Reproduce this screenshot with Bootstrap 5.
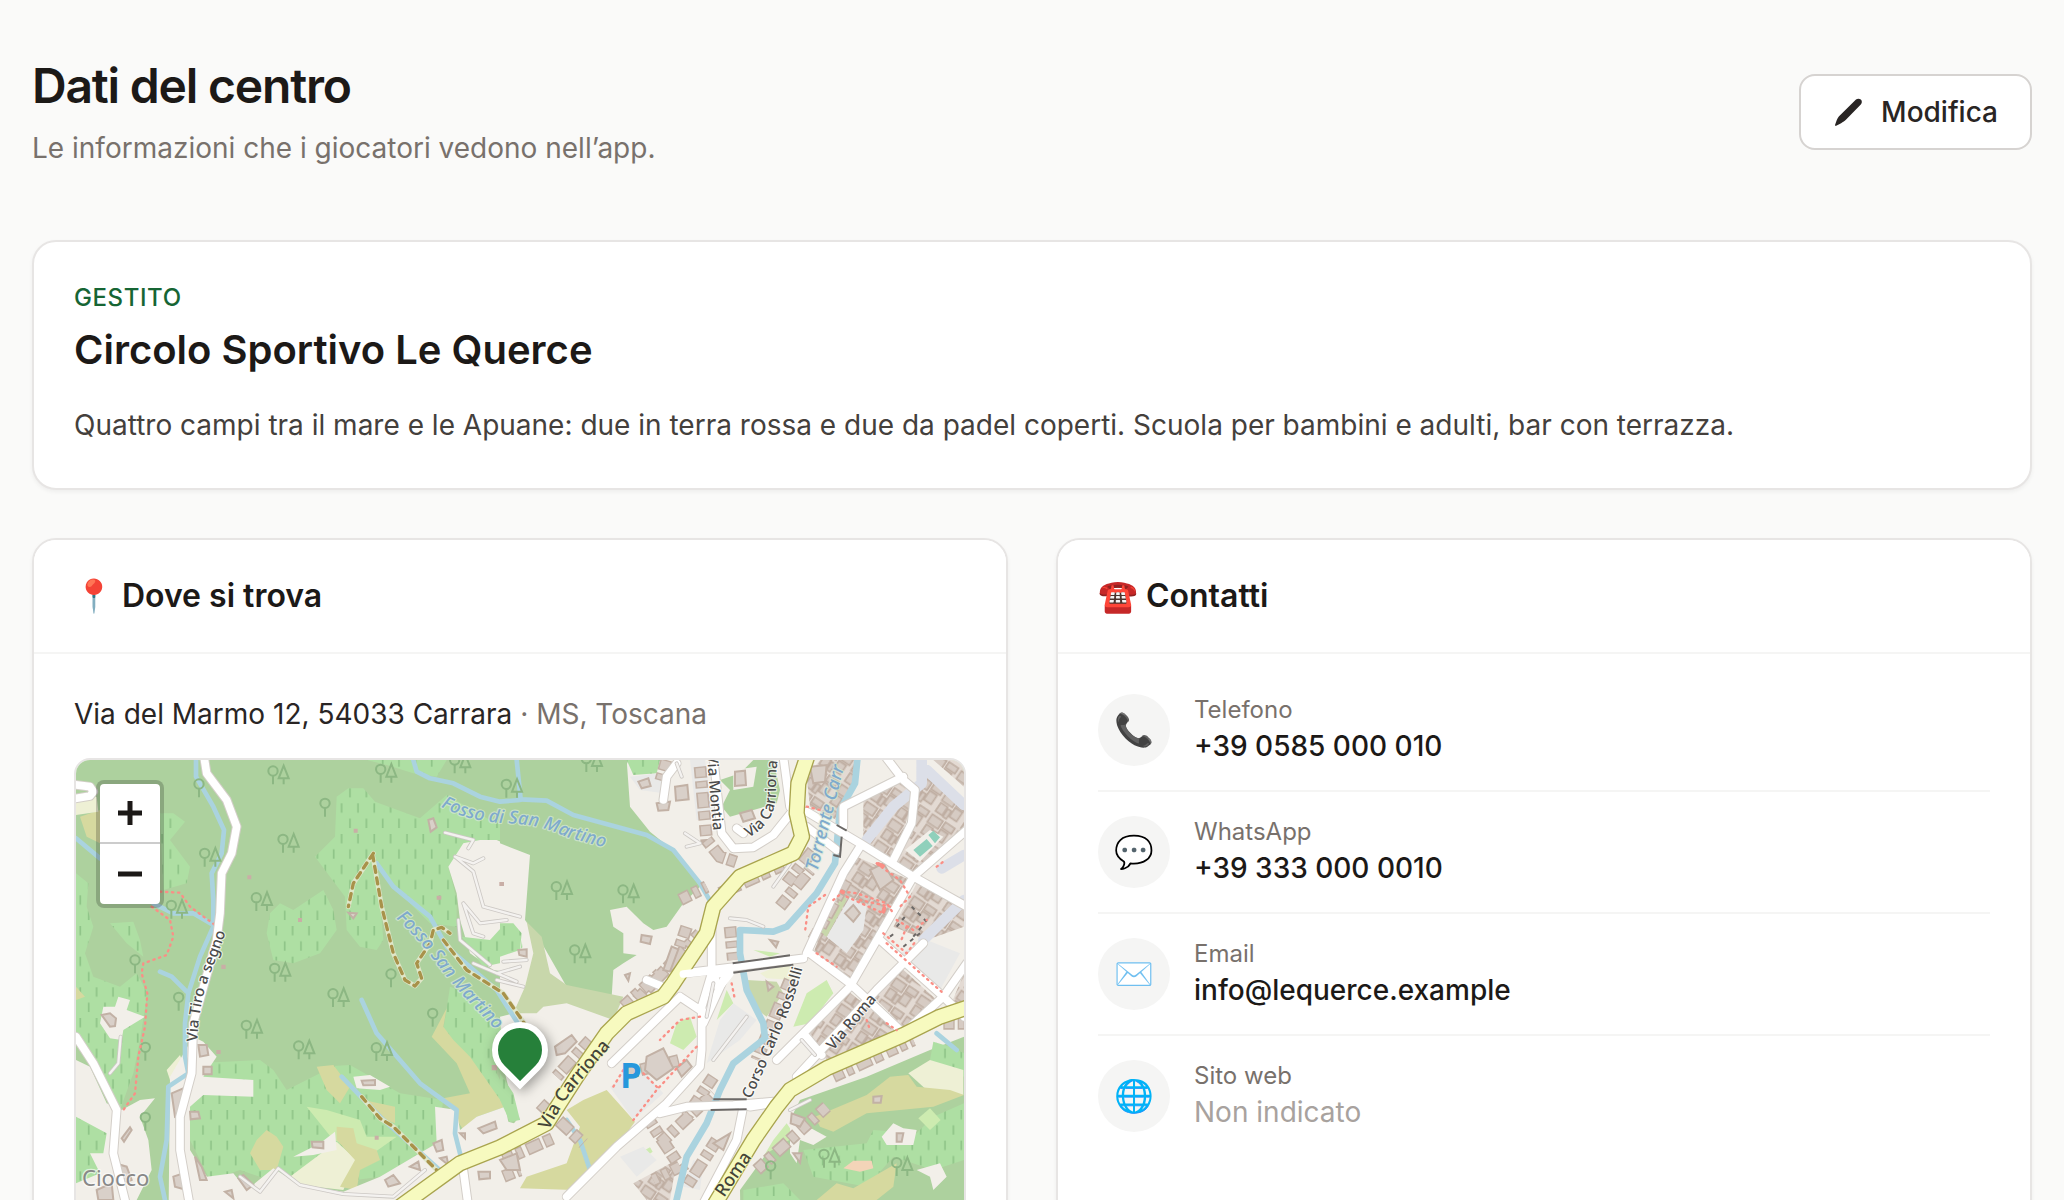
<!DOCTYPE html>
<html lang="it">
<head>
<meta charset="utf-8">
<meta name="viewport" content="width=device-width, initial-scale=1">
<title>Dati del centro</title>
<link href="https://cdn.jsdelivr.net/npm/bootstrap@5.3.0/dist/css/bootstrap.min.css" rel="stylesheet">
<style>
  body { font-family: Inter, "Noto Color Emoji", sans-serif; font-size: 28px; line-height: 40px; color: #1c1917; background: #fafaf9; }
  .page { height: 100vh; overflow: hidden; padding: 56px 32px 0; }
  .page-head { margin-bottom: 72px; }
  h1 { font-size: 48px; line-height: 60px; font-weight: 600; letter-spacing: -0.025em; margin-bottom: 12px; }
  .muted { color: #78716c; }
  .faint { color: #a8a29e; }
  .btn-edit { --bs-btn-bg: #fff; --bs-btn-border-color: #d6d3d1; --bs-btn-color: #292524; --bs-btn-hover-bg: #f5f5f4; --bs-btn-hover-border-color: #d6d3d1;
    --bs-btn-border-width: 2px; --bs-btn-border-radius: 16px; --bs-btn-padding-x: 32px; --bs-btn-padding-y: 16px;
    --bs-btn-font-size: 28px; --bs-btn-line-height: 40px; --bs-btn-font-weight: 500; gap: 16px; }
  .panel { --bs-card-border-width: 2px; --bs-card-border-color: #e7e5e4; --bs-card-border-radius: 24px; --bs-card-inner-border-radius: 22px;
    --bs-card-spacer-x: 40px; --bs-card-spacer-y: 40px; --bs-card-cap-padding-x: 40px; --bs-card-cap-padding-y: 32px; --bs-card-cap-bg: #fff;
    box-shadow: 0 2px 4px rgba(0,0,0,.05); color: inherit; }
  .panel > .card-header { border-bottom: 2px solid #f5f5f4; }
  .panel h2 { font-size: 32px; line-height: 48px; font-weight: 600; margin: 0; }
  .eyebrow { font-size: 24px; line-height: 32px; font-weight: 500; letter-spacing: 0.025em; color: #166534; margin-bottom: 8px; }
  .panel .club-name { font-size: 40px; line-height: 56px; margin-bottom: 24px; }
  .club-text { line-height: 46px; color: #44403c; }
  .grid-gap { --bs-gutter-x: 48px; --bs-gutter-y: 48px; }
  .address { color: #292524; margin-bottom: 24px; }
  .map-box { height: 640px; border: 2px solid #e7e5e4; border-radius: 16px; overflow: hidden; position: relative; }
  .map-box > svg { display: block; width: 100%; height: 100%; }
  .zoom-ctl { position: absolute; left: 20px; top: 20px; width: 68px; border: 4px solid rgba(0,0,0,.2); border-radius: 8px; background: #fff; background-clip: padding-box; }
  .zoom-ctl button { height: 60px; border: 0; background: none; padding: 0; display: flex; align-items: center; justify-content: center; }
  .zoom-ctl button:first-child { border-bottom: 2px solid #ccc; }
  .map-pin { position: absolute; left: 50%; top: 262px; width: 56px; height: 56px; margin-left: -28px; background: #26803a; border: 6px solid #fff; border-radius: 50% 50% 50% 0; transform: rotate(-45deg); box-shadow: 0 4px 12px rgba(0,0,0,.35); }
  .contact { gap: 24px; padding: 24px 0; border-bottom: 2px solid #f5f5f4; }
  .contact:first-child { padding-top: 0; }
  .contact:last-child { border-bottom: 0; }
  .contact-icon { width: 72px; height: 72px; border-radius: 50%; background: #f5f5f4; flex: none; font-size: 32px; }
  .contact-label { font-size: 24px; line-height: 32px; }
  .contact a { color: #1c1917; font-weight: 500; text-decoration: none; }
  /* map layers */
  .wood { fill: #add19e; } .scrub { fill: url(#scrubFill); } .heath { fill: #d6d99f; } .grass { fill: #cdebb0; }
  .farm { fill: #eef0d5; } .town { fill: #f2efe9; } .orchard { fill: #c8d7ab; } .paved { fill: #e9e9e8; } .pitch { fill: #8fd0bb; }
  .water { fill: none; stroke: #aad3df; stroke-width: 14; stroke-linejoin: round; stroke-linecap: round; }
  .water-wide { stroke-width: 20; }
  .road-case, .road, .main-case, .main-road, .lane-case, .lane, .footway, .track, .track-halo, .plaza { fill: none; stroke-linejoin: round; stroke-linecap: round; }
  .road-case { stroke: #d3cec8; stroke-width: 29; } .road { stroke: #fff; stroke-width: 23; }
  .main-case { stroke: #a9a44e; stroke-width: 49; } .main-road { stroke: #f7fabf; stroke-width: 41; }
  .lane-case { stroke: #ccc8c4; stroke-width: 12; } .lane { stroke: #f4f2f0; stroke-width: 7; }
  .plaza { stroke: #dcdfe8; stroke-width: 32; }
  .footway { stroke: #fa8f86; stroke-width: 7; stroke-dasharray: 4 14; }
  .track { stroke: #a8924a; stroke-width: 10; stroke-dasharray: 18 17; } .track-halo { stroke: #dfe6c8; stroke-width: 14; }
  .bld-edge { fill: none; stroke: #c2b1a5; stroke-width: 38; stroke-dasharray: 34 9 22 12 48 8 28 14; }
  .bld { fill: none; stroke: #d6cbc3; stroke-width: 28; stroke-dasharray: 26 17 14 20 40 16 20 22; stroke-dashoffset: -4; }
  .block { fill: #d9d0c9; stroke: #c2b1a5; stroke-width: 6; }
  .bridge { fill: none; stroke: #6b6866; stroke-width: 6; }
  .tree { fill: none; stroke: #8cb783; stroke-width: 6; }
  .street, .stream { font-family: "Noto Sans", sans-serif; font-size: 45px; font-weight: 500; fill: #4a4a4a; stroke: #fff; stroke-width: 7; stroke-opacity: .7; paint-order: stroke; stroke-linejoin: round; }
  .street.on-main { font-size: 54px; fill: #444438; stroke: #f7fabf; }
  .stream { font-size: 54px; font-style: italic; fill: #7eaacd; stroke: #d9ead6; }
  .hamlet { font-family: "Noto Sans", sans-serif; font-size: 66px; fill: #888; stroke: #fff; stroke-width: 8; stroke-opacity: .6; paint-order: stroke; }
  .parking { font-family: "DejaVu Sans", sans-serif; font-size: 96px; fill: #2698dc; stroke: #2698dc; stroke-width: 6; }
</style>
<script src="https://cdn.jsdelivr.net/npm/bootstrap@5.3.0/dist/js/bootstrap.bundle.min.js" defer></script>
</head>
<body>
<main class="page">
  <header class="page-head d-flex justify-content-between align-items-center">
    <div>
      <h1>Dati del centro</h1>
      <p class="muted mb-0">Le informazioni che i giocatori vedono nell’app.</p>
    </div>
    <button type="button" class="btn btn-edit d-flex align-items-center">
      <svg width="32" height="32" viewBox="0 0 32 32" aria-hidden="true"><path fill="currentColor" d="M23 3.600c1.300-1.200 3.400-1.300 4.800 0s1.400 3.500 0 4.900L13.400 23.300c-1.800 1.800-3.400 2.900-5.300 3.900l-4.900 2.600c-.7.400-1.400-.2-1.100-1l1.600-4.500c.7-2 1.700-3.400 3.100-4.800z"/></svg>
      Modifica
    </button>
  </header>

  <section class="card panel mb-5">
    <div class="card-body">
      <div class="eyebrow">GESTITO</div>
      <h2 class="club-name">Circolo Sportivo Le Querce</h2>
      <p class="club-text mb-0">Quattro campi tra il mare e le Apuane: due in terra rossa e due da padel coperti. Scuola per bambini e adulti, bar con terrazza.</p>
    </div>
  </section>

  <div class="row row-cols-2 grid-gap mt-0">
    <div class="col mt-0">
      <section class="card panel h-100">
        <div class="card-header"><h2>📍 Dove si trova</h2></div>
        <div class="card-body">
          <p class="address">Via del Marmo 12, 54033 Carrara <span class="muted">· MS, Toscana</span></p>
          <div class="map-box">
            <svg viewBox="48 60 2664 1908" preserveAspectRatio="xMidYMin slice" role="img" aria-label="Mappa di Carrara">
              <defs>
                <pattern id="scrubFill" width="49" height="92" patternUnits="userSpaceOnUse">
                  <rect width="49" height="92" fill="#aedfa3"/>
                  <path d="M12 6v28M37 52v28" stroke="#8fc488" stroke-width="5"/>
                </pattern>
                <pattern id="roofs" width="92" height="78" patternUnits="userSpaceOnUse" patternTransform="rotate(34)">
                  <rect width="92" height="78" fill="#e3dad3"/>
                  <path d="M4 5h38v28H4zM50 3h34v20H50zM50 29h26v32H50zM6 40h24v30H6zM34 44h12v28H34z" fill="#d6cbc3" stroke="#bfaea2" stroke-width="5"/>
                </pattern>
                <g id="treePair" class="tree"><circle cx="-16" cy="-12" r="14"/><path d="M-16 2v26M16-28L1 10h30zM16 10v18"/></g>
                <g id="treeOne" class="tree"><circle cx="0" cy="-10" r="14"/><path d="M0 4v26"/></g>
                <path id="pTiro" d="M412 905Q415 790 455 690T502 555"/>
                <path id="pMartino" d="M1008 535Q1070 590 1125 665T1260 820Q1320 880 1400 980"/>
                <path id="pMartino2" d="M-178 200Q-90 246 20 250T200 292Q280 312 400 348"/>
                <path id="pTorrente" d="M952 395Q985 270 1012 160T1060 -20"/>
                <path id="pMontia" d="M622 44Q628 160 646 330"/>
                <path id="pCarrTop" d="M745 293Q830 250 828 150T848 20"/>
                <path id="pCorso" d="M752 1078Q820 930 860 830T920 630"/>
                <path id="pRoma" d="M1000 932L1150 755"/>
                <path id="pCarriona" d="M146 1172Q190 1080 240 1025T372 868"/>
                <path id="pRoma2" d="M672 1374L785 1210"/>
              </defs>
              <rect class="wood" x="48" y="60" width="2664" height="1908"/>

              <!-- western slopes -->
              <path class="scrub" d="M830 170L865 145 910 145 945 185 1080 235 1160 165 1290 240 1400 250 1400 300 1260 300 1165 380 1190 480 1190 560 1110 550 1000 440 930 350 960 480 970 600 950 630 900 620 860 570 855 470 765 350 825 290z"/>
              <path class="scrub" d="M630 520L660 490 700 510 790 450 820 510 830 570 780 640 700 670 640 660 620 580zM920 60H1160L1130 110 1060 100 980 75zM48 400L85 430 80 500 100 560 75 640 100 710 180 740 230 700 262 760 240 900 220 1000 180 1110 48 880zM300 220L340 220 375 245 330 300 390 380 380 430 310 450zM150 550L220 545 240 600 250 650 200 610z"/>
              <path class="scrub" d="M400 970L600 960 640 990 680 1050 780 1000 780 980 870 975 1020 1060 1150 1080 1130 1210 960 1310 700 1345 540 1290 450 1320 390 1200 370 1100zM1170 740L1250 770 1330 860 1300 900 1310 1000 1380 1140 1350 1145 1290 1040 1200 930 1150 870z"/>
              <path class="heath" d="M1160 805L1150 860 1180 900 1230 950 1335 1100 1250 1130 1210 1170 1150 1075 1230 1060 1190 970 1115 890zM770 980L820 975 870 1040 840 1090 800 1050zM570 1240L590 1200 620 1170 650 1190 670 1220 650 1290 600 1290zM60 230L120 210 120 310 80 290zM910 1080L1005 1100 1005 1150 950 1130z"/>
              <path class="grass" d="M740 1100L800 1110 900 1140 920 1190 1010 1190 940 1240 820 1200z"/>
              <path class="farm" d="M690 1310L830 1205 890 1260 850 1350 720 1335zM320 990L360 945 380 1000 330 1020zM48 180L110 170 115 215 48 225z"/>
              <path class="heath" d="M830 1160L880 1165 890 1210 950 1230 960 1260 900 1290 890 1350 840 1340 885 1260 830 1200zM48 740L75 770 48 780z"/>
              <path class="town" d="M1165 380L1210 310 1260 300 1310 300 1410 345 1400 620 1380 1000 1370 700 1300 690 1230 640 1200 540 1190 460z"/>
              <path class="town" d="M120 850L130 800 165 800 175 770 210 780 200 810 255 830 190 870 185 900 150 895zM48 960L90 980 140 1090 185 1110 240 1080 285 1075 240 1130 265 1200 275 1290 230 1380V1968H48zM330 1010L400 890 430 905 470 950 430 1010 580 1020 580 1070 430 1065 390 1100 390 1230 460 1340 480 1968 320 1968z"/>
              <path class="town" d="M450 1380L440 1310 520 1300 560 1350 640 1285 720 1335 850 1355 960 1310 1130 1210 1125 1100 1190 1110 1200 1170 1250 1130 1335 1100 1345 1145 1400 1160V1968H450zM700 1250L780 1210 825 1175 830 1230 760 1245zM880 1010L930 1005 990 1040 960 1050 890 1045z"/>
              <path class="scrub" d="M1205 590L1290 600 1340 545 1390 548 1390 620 1340 665 1270 680z"/>
              <path class="scrub" d="M48 1130L140 1180 130 1240 90 1240 120 1300 48 1330z"/>

              <!-- town and eastern hills -->
              <g transform="translate(1320 0)">
                <path class="town" d="M385 60H1392V1968H0V1200L50 1140 10 980 0 830 40 820 75 700 60 550 40 340 300 300z"/>
                <path class="town" d="M0 310L90 345 75 540 60 640 80 720 45 820 0 760z"/>
                <path class="scrub" d="M0 550L40 550 65 580 60 630 0 650zM0 1000L40 1060 60 1140 30 1145 0 1080z"/>
                <path class="wood" d="M60 60H380L390 200 450 275 530 340 600 440 550 490 500 560 460 570 430 550 380 500 330 510 340 560 370 580 370 640 410 645 370 670 340 690 335 770 200 740 120 600 75 540 90 345 0 310V60z"/>
                <path class="scrub" d="M380 60H480L470 100 400 105z"/>
                <path class="orchard" d="M80 545L125 590 150 700 200 735 370 770 340 840 200 790 130 800 110 820 40 820 75 740 100 640z"/>
                <path class="heath" d="M80 1310L200 1270 240 1160 200 1110 250 1080 320 1050 405 1145 350 1220 220 1350 60 1345z"/>
                <path fill="url(#roofs)" d="M920 110L960 60 1080 60 1040 190 1010 240 930 200zM1090 170L1220 120 1240 180 1180 360 1090 300zM1250 160L1290 90 1392 180V280L1240 400 1190 370zM1300 60H1392V140zM1070 350L1230 420 1110 640 1040 730 940 640 1000 480zM1250 430L1392 500V560L1280 600 1180 560zM1110 760L1200 680 1310 780 1210 860zM930 880L1040 750 1190 870 980 960zM400 1330L530 1260 510 1380 440 1380zM1350 800L1392 700V800z"/>
                <path class="grass" d="M920 760L980 720 1000 760 930 850 880 860zM820 1200L860 1150 880 1180 850 1230 790 1250zM530 850L570 830 590 890 550 930 510 910zM760 630L840 640 810 650zM650 840L680 750 700 790zM425 1235L450 1222 458 1235 435 1252z"/>
                <path class="orchard" d="M740 720L830 725 850 760 800 830 760 800z"/>
                <path class="farm" d="M780 700L880 660 880 720 800 715z"/>
                <path class="paved" d="M570 60H615L640 240 590 240zM390 110L480 100 490 160 420 150zM980 590L1050 470 1100 500 1090 570 1040 640zM1200 640L1280 600 1380 640 1320 750 1240 700zM330 1040L420 980 490 1060 400 1140zM620 970L660 840 700 790 770 840 720 900zM360 1250L430 1220 470 1260 410 1310zM550 1340L580 1260 610 1270 600 1350z"/>
                <path class="orchard" d="M960 580L1030 465 1040 480 980 590z"/>
                <path class="wood" d="M660 120L720 100 760 60 820 60 840 150 830 190 690 230 665 200 690 150z"/>
                <path class="town" d="M700 90L770 80 760 140 700 150z"/>
                <path class="wood" d="M1392 890L1290 930 1100 1010 900 1080 870 1140 885 1190 800 1240 720 1350 730 1968H1392z"/>
                <path class="scrub" d="M1300 905L1350 920 1392 940V1010L1290 960zM910 1230L1100 1210 1120 1170 1250 1180 1300 1130 1392 1090V1260L1300 1290 1180 1250 1100 1340 940 1310zM730 1350L850 1330 900 1380H730z"/>
                <path class="farm" d="M1225 1000L1290 960 1390 990V1065L1280 1050z"/>
                <path class="heath" d="M945 1130L1100 1065 1170 1010 1225 1005 1250 1040 1350 1050 1392 1065 1300 1100 1100 1120 1000 1175 960 1160zM1060 1345L1190 1270 1180 1340 1130 1380H950L1010 1330z"/>
                <path class="grass" d="M1255 1135L1290 1105 1322 1140 1290 1170z"/>
                <path class="town" d="M1145 1190L1180 1150 1210 1165 1250 1170 1240 1215 1160 1215zM1250 1290L1320 1270 1340 1310 1300 1350 1290 1310zM870 1130L980 1190 940 1215 900 1200 890 1270 870 1240z"/>
                <path class="town" d="M1215 330L1290 270 1330 290 1260 365z"/>
                <path class="pitch" d="M1240 330L1280 297 1298 318 1260 350zM1285 285L1300 272 1320 292 1305 310z"/>
                <path class="plaza" d="M1265 60L1265 130 1180 200 1100 300M1280 90L1392 195M1325 385L1392 345M1270 600L1392 480"/>
              </g>

              <!-- streams -->
              <path class="water" d="M408 60V110L460 200 492 270 485 340 455 400 460 480 460 560 420 650 385 760 375 850 375 950 385 1000 325 1040 320 1200 300 1310 315 1380M300 695L335 710 380 755M48 295L120 355M280 490L340 520 400 520 460 555"/>
              <path class="water" d="M950 370L1000 440 1110 530 1160 620 1310 750 1380 860M905 780L950 880 1080 1030 1190 1110 1185 1180 1205 1260M845 1010L960 1130 1150 1300M1060 60L1070 95 1110 115 1180 130 1260 170 1320 185 1380 180"/>
              <g transform="translate(1320 0)">
                <path class="water" d="M50 60L62 178 140 182 220 225 440 285 520 330 600 430 640 500M200 1140L240 1200 270 1290M1310 880L1370 930"/>
              </g>

              <!-- buildings -->
              <g transform="translate(1320 0)">
                <path class="bld-edge" d="M600 80L620 300 660 350 720 370M410 780L600 580M370 800L480 700M690 560L700 660M270 900L170 1010M120 1090L250 1210M560 560L520 680M860 430L940 330M660 460L860 370M840 500L930 390M770 1290L980 1100M1000 1010L1240 900M440 1130L540 1280 460 1320M640 1010L560 1130M870 720L770 960M650 1200L560 1340M380 1000L540 960M480 1210L640 1060M10 1260L170 1190M1040 420L940 600M500 60L480 130M540 480L620 440M10 1310L60 1290M1330 850L1392 850"/>
                <path class="bld" d="M600 80L620 300 660 350 720 370M410 780L600 580M370 800L480 700M690 560L700 660M270 900L170 1010M120 1090L250 1210M560 560L520 680M860 430L940 330M660 460L860 370M840 500L930 390M770 1290L980 1100M1000 1010L1240 900M440 1130L540 1280 460 1320M640 1010L560 1130M870 720L770 960M650 1200L560 1340M380 1000L540 960M480 1210L640 1060M10 1260L170 1190M1040 420L940 600M500 60L480 130M540 480L620 440M10 1310L60 1290M1330 850L1392 850"/>
                <path class="block" d="M165 920L215 885 230 905 195 940 170 945zM425 585L455 590 450 612 422 605zM415 125L445 115 452 138 425 145zM525 140L562 135 566 178 528 182zM470 190L510 185 505 210 475 212zM705 95L735 92 738 135 705 138zM440 950L490 925 520 985 470 1020 435 990zM1120 1070L1145 1068 1142 1088 1120 1088zM1190 1180L1210 1180 1205 1205 1190 1205zM875 1120L915 1135 900 1160 872 1150zM880 1240L905 1240 900 1268zM810 600L835 605 828 622zM800 725L820 740 805 752zM640 1210L690 1180 670 1230zM375 705L390 700 385 722zM55 630L80 628 80 650 58 645zM720 220L755 210 765 235 730 245zM930 80L980 75 975 125 940 130zM490 690L515 620 535 628 510 695z"/>
                <path class="block" d="M1110 390L1150 370 1180 420 1140 450zM1035 520L1060 495 1080 520 1060 545zM530 985L560 960 575 980 545 1010z"/>
                <path fill="#f3d4b8" d="M1030 1285L1060 1262H1115L1120 1285 1080 1295z"/>
                <path class="water water-wide" d="M1072 60L1065 130 1020 210 1005 370 950 460 860 560 820 575 720 570 720 640 740 750 790 850 795 895 700 970 660 1050 620 1150 560 1250 525 1400"/>
              </g>
              <path class="block" d="M125 825L150 820 168 835 165 858 150 860zM415 915L440 915 445 945 420 950zM430 980L455 980 455 1003 430 1003zM335 1060L370 1045 365 1120 345 1130zM390 1115L415 1115 420 1135 392 1138zM185 1195L210 1162 215 1170 192 1205zM165 1270L200 1280 215 1320 190 1330zM110 1350L155 1330 160 1380 115 1380zM340 1310L370 1300 380 1350 345 1340zM405 1250L425 1280 440 1320 420 1320zM535 1315L550 1305 580 1335 560 1350zM755 1205L790 1205 790 1225 758 1222zM905 1022L945 1020 945 1035 910 1036zM1105 240L1120 235 1130 262 1112 275zM865 518L890 520 880 535zM1120 1210L1145 1200 1150 1230 1130 1235zM1140 1255L1160 1250 1165 1275zM1255 1165L1305 1145 1310 1165 1270 1180zM1255 1295L1290 1295 1290 1315 1258 1318zM1200 1180L1215 1180 1215 1195zM975 1320L1000 1305 1020 1330 985 1340zM1050 1280L1075 1265 1080 1290zM495 1355L515 1350 520 1375zM1320 1260L1370 1240 1380 1290 1340 1290z"/>
              <path fill="#c9aea6" d="M881 266h12v12h-12zM562 406h12v12h-12zM714 534h12v12h-12zM1130 467h14v12h-14zM484 674h13v13h-13zM469 930h13v12h-13zM1318 426h14v12h-14zM944 1187h12v12h-12zM1295 975h16v16h-16z"/>

              <!-- forest marks -->
              <use href="#treePair" x="655" y="105"/><use href="#treePair" x="978" y="100"/><use href="#treePair" x="1200" y="72"/><use href="#treeOne" x="795" y="200"/>
              <use href="#treePair" x="685" y="310"/><use href="#treePair" x="450" y="352"/><use href="#treePair" x="605" y="485"/><use href="#treePair" x="660" y="697"/>
              <use href="#treeOne" x="993" y="712"/><use href="#treePair" x="835" y="773"/><use href="#treePair" x="575" y="868"/><use href="#treePair" x="732" y="930"/>
              <use href="#treePair" x="965" y="935"/><use href="#treeOne" x="1118" y="830"/><use href="#treePair" x="350" y="508"/><use href="#treeOne" x="417" y="142"/>
              <use href="#treeOne" x="356" y="782"/><use href="#treeOne" x="256" y="932"/><use href="#treeOne" x="256" y="1142"/><use href="#treeOne" x="225" y="670"/>
              <use href="#treePair" x="1355" y="145"/><use href="#treePair" x="1595" y="68"/><use href="#treePair" x="1505" y="452"/><use href="#treePair" x="1705" y="462"/>
              <use href="#treePair" x="1560" y="642"/><use href="#treePair" x="2308" y="1255"/><use href="#treePair" x="2526" y="1280"/><use href="#treeOne" x="2132" y="1288"/>

              <!-- lanes and paths -->
              <path class="lane-case" d="M1155 278L1240 300 1225 325M1185 350L1240 370 1270 355M1185 350L1240 395 1270 500 1380 530M1210 490L1260 550 1340 540M1210 490L1240 580 1270 590M1195 540L1200 600 1290 675M150 1000L175 970 182 890M540 1310L600 1355 655 1285 720 1335 850 1362 1000 1370 1095 1290M1310 700L1380 680M1240 670L1370 725M1330 665L1400 660M1310 720L1390 740"/>
              <path class="lane" d="M1155 278L1240 300 1225 325M1185 350L1240 370 1270 355M1185 350L1240 395 1270 500 1380 530M1210 490L1260 550 1340 540M1210 490L1240 580 1270 590M1195 540L1200 600 1290 675M150 1000L175 970 182 890M540 1310L600 1355 655 1285 720 1335 850 1362 1000 1370 1095 1290M1310 700L1380 680M1240 670L1370 725M1330 665L1400 660M1310 720L1390 740"/>
              <path class="track-halo" d="M940 340L880 430 865 500M938 345L965 500 1000 640 1035 720 1065 738 1085 715 1070 670 1110 610 1120 570 1145 562 1170 580M1150 600L1220 690 1330 760 1400 860M905 1070L960 1135 1000 1160 1140 1300"/>
              <path class="track" d="M940 340L880 430 865 500M938 345L965 500 1000 640 1035 720 1065 738 1085 715 1070 670 1110 610 1120 570 1145 562 1170 580M1150 600L1220 690 1330 760 1400 860M905 1070L960 1135 1000 1160 1140 1300"/>
              <path class="footway" d="M300 455L360 458 390 500 465 555M275 500L330 540 340 590 320 645 250 670 245 700 262 760 255 860 235 950 225 1060 190 1110"/>

              <!-- streets -->
              <path class="road-case" d="M432 50L440 100 500 180 530 260 515 340 485 400 480 520 470 600 400 850 395 1000 360 1130 360 1230 390 1400M48 890L100 970 170 1110 160 1240 200 1400M30 132L90 140 100 155 90 168 30 178M1210 1290L1225 1400"/>
              <path class="road" d="M432 50L440 100 500 180 530 260 515 340 485 400 480 520 470 600 400 850 395 1000 360 1130 360 1230 390 1400M48 890L100 970 170 1110 160 1240 200 1400M30 132L90 140 100 155 90 168 30 178M1210 1290L1225 1400"/>
              <g transform="translate(1320 0)">
                <path class="road-case" d="M850 50L870 200M640 50L665 280 700 325 760 322 820 285 880 210M530 70L500 110 490 180M920 215L1080 310 1240 410 1400 500M920 260L1010 330M1160 55L1210 120 1245 150 1235 250 1180 360M1210 110L1090 170 1030 200 1030 260M1080 320L1030 400 920 640M1400 270L1240 410 1050 740 830 960M930 640L1050 730 1200 870M1140 600L1330 770 1392 830M1270 610L1130 750 890 1010M1400 670L1330 770 1220 870M910 880L965 945M550 700L910 655M635 560L635 700 605 800 605 930 600 980 500 1090 350 1220 200 1370M670 720L610 850M540 770L335 970M540 770L600 810M440 720L500 745M480 1120L560 1100 700 1095 820 1085M730 1100L710 1200 610 1390M710 265L730 280M750 1100L850 1085"/>
                <path class="road" d="M850 50L870 200M640 50L665 280 700 325 760 322 820 285 880 210M530 70L500 110 490 180M920 215L1080 310 1240 410 1400 500M920 260L1010 330M1160 55L1210 120 1245 150 1235 250 1180 360M1210 110L1090 170 1030 200 1030 260M1080 320L1030 400 920 640M1400 270L1240 410 1050 740 830 960M930 640L1050 730 1200 870M1140 600L1330 770 1392 830M1270 610L1130 750 890 1010M1400 670L1330 770 1220 870M910 880L965 945M550 700L910 655M635 560L635 700 605 800 605 930 600 980 500 1090 350 1220 200 1370M670 720L610 850M540 770L335 970M540 770L600 810M440 720L500 745M480 1120L560 1100 700 1095 820 1085M730 1100L710 1200 610 1390M710 265L730 280M750 1100L850 1085"/>
                <path class="road" d="M640 700L655 745 690 700z"/>
                <path class="lane-case" d="M820 440L870 370M690 535L740 540 790 560M530 70L545 110M555 280L600 310 560 320M905 900L945 945M870 1110L930 1080M640 730L620 830M640 960L740 830"/>
                <path class="lane" d="M820 440L870 370M690 535L740 540 790 560M530 70L545 110M555 280L600 310 560 320M905 900L945 945M870 1110L930 1080M640 730L620 830M640 960L740 830"/>
                <path class="bridge" d="M698 670L870 646M700 698L880 674M640 1078L740 1078M632 1110L740 1108M1010 255L1040 272M1000 345L1020 350 1025 290"/>
                <path class="bridge" stroke-dasharray="12 14" d="M1190 560L1215 530M1235 500L1280 545M1170 590L1190 575M1210 620L1260 580M1240 590L1265 560"/>
                <path class="main-case" d="M925 40L895 130 890 220 906 290 880 340 720 410 640 500 620 580 520 730 490 770 380 820 320 880 230 1010 140 1150 0 1222 -120 1270 -300 1400M1410 800L1320 830 1210 885 980 985 870 1050 830 1100 760 1200 640 1400"/>
                <path class="main-road" d="M925 40L895 130 890 220 906 290 880 340 720 410 640 500 620 580 520 730 490 770 380 820 320 880 230 1010 140 1150 0 1222 -120 1270 -300 1400M1410 800L1320 830 1210 885 980 985 870 1050 830 1100 760 1200 640 1400"/>
                <path class="road" d="M550 702L640 692"/>
                <path class="footway" d="M920 200L960 210M975 465L925 500 915 575M1000 480L1030 455 1070 460 1160 490 1180 520M1040 470L1150 520M1080 480L1170 500M1130 370L1150 385 1200 420 1230 470 1200 500M1150 580L1220 640 1250 600M1190 540L1240 570 1280 540M1220 560L1200 610M1160 610L1330 760M950 640L1010 680M695 730L705 780M600 830L540 840 480 900M590 920L470 1050 400 1140M430 1000L480 1050M1310 380L1330 365M370 990L340 1040M1100 840L1110 870M1160 850L1190 870"/>
                <path fill="none" stroke="#fa8f86" stroke-width="12" stroke-linecap="round" d="M1025 455l4 2M1135 372l14 6M1150 515l3 -10"/>
              </g>

              <!-- labels -->
              <text class="street"><textPath href="#pTiro">Via Tiro a segno</textPath></text>
              <text class="stream"><textPath href="#pMartino">Fosso San Martino</textPath></text>
              <text class="hamlet" x="66" y="1338">Ciocco</text>
              <g transform="translate(1320 0)">
                <text class="stream"><textPath href="#pMartino2">Fosso di San Martino</textPath></text>
                <text class="stream"><textPath href="#pTorrente">Torrente Carr</textPath></text>
                <text class="street"><textPath href="#pMontia">Via Montia</textPath></text>
                <text class="street"><textPath href="#pCarrTop">Via Carriona</textPath></text>
                <text class="street"><textPath href="#pCorso">Corso Carlo Rosselli</textPath></text>
                <text class="street"><textPath href="#pRoma">Via Roma</textPath></text>
                <text class="street on-main"><textPath href="#pCarriona">Via Carriona</textPath></text>
                <text class="street on-main"><textPath href="#pRoma2">Roma</textPath></text>
                <text class="parking" x="363" y="1041">P</text>
              </g>
            </svg>
            <div class="map-pin"></div>
            <div class="zoom-ctl d-flex flex-column">
              <button type="button" aria-label="Ingrandisci"><svg width="24" height="24" viewBox="0 0 24 24" aria-hidden="true"><path d="M12 0v24M0 12h24" stroke="#1c1917" stroke-width="5"/></svg></button>
              <button type="button" aria-label="Riduci"><svg width="24" height="24" viewBox="0 0 24 24" aria-hidden="true"><path d="M0 12h24" stroke="#1c1917" stroke-width="5"/></svg></button>
            </div>
          </div>
        </div>
      </section>
    </div>

    <div class="col mt-0">
      <section class="card panel h-100">
        <div class="card-header"><h2>☎️ Contatti</h2></div>
        <div class="card-body">
          <div class="contact d-flex align-items-center">
            <span class="contact-icon d-flex align-items-center justify-content-center">📞</span>
            <div><div class="contact-label muted">Telefono</div><a href="tel:+390585000010">+39 0585 000 010</a></div>
          </div>
          <div class="contact d-flex align-items-center">
            <span class="contact-icon d-flex align-items-center justify-content-center">💬</span>
            <div><div class="contact-label muted">WhatsApp</div><a href="https://wa.me/393330000010">+39 333 000 0010</a></div>
          </div>
          <div class="contact d-flex align-items-center">
            <span class="contact-icon d-flex align-items-center justify-content-center">✉️</span>
            <div><div class="contact-label muted">Email</div><a href="mailto:info@lequerce.example">info@lequerce.example</a></div>
          </div>
          <div class="contact d-flex align-items-center">
            <span class="contact-icon d-flex align-items-center justify-content-center">🌐</span>
            <div><div class="contact-label muted">Sito web</div><div class="faint">Non indicato</div></div>
          </div>
        </div>
      </section>
    </div>
  </div>
</main>
</body>
</html>
